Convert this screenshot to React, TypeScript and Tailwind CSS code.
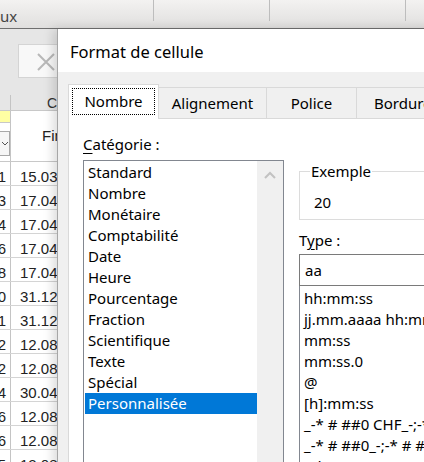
import React from "react";

const UI = { fontFamily: '"Noto Sans", "Open Sans", sans-serif' };
const CELL = { fontFamily: '"Liberation Sans", Arial, sans-serif' };

const ROWS = [
  ["1", "15.03."],
  ["3", "17.04."],
  ["4", "17.04."],
  ["6", "17.04."],
  ["8", "17.04."],
  ["0", "31.12."],
  ["1", "31.12."],
  ["2", "12.08."],
  ["2", "12.08."],
  ["4", "30.04."],
  ["6", "12.08."],
  ["6", "12.08."],
  ["5", "12.08."],
];

const CATEGORIES = [
  "Standard",
  "Nombre",
  "Monétaire",
  "Comptabilité",
  "Date",
  "Heure",
  "Pourcentage",
  "Fraction",
  "Scientifique",
  "Texte",
  "Spécial",
  "Personnalisée",
];

const FORMATS = [
  "hh:mm:ss",
  "jj.mm.aaaa hh:mm",
  "mm:ss",
  "mm:ss.0",
  "@",
  "[h]:mm:ss",
  "_-* # ##0 CHF_-;-* # ##0 CHF_-",
  "_-* # ##0_-;-* # ##0_-",
  "_-* # ##0.00_-",
];

function Sheet() {
  return (
    <div className="flex flex-col w-[60px]" style={CELL}>
      {/* barre de formule */}
      <div className="h-[66px] bg-[#e6e6e6] pt-[15px] pl-[18px]">
        <div className="h-[34px] w-[60px] bg-[#f8f8f8] border border-[#d4d4d4] pl-[18px] pt-[8px]">
          <svg width="18" height="18" viewBox="0 0 18 18">
            <path d="M1 1 L17 17 M17 1 L1 17" stroke="#b8b8b8" strokeWidth="2" fill="none" />
          </svg>
        </div>
      </div>
      {/* en-tête de colonne */}
      <div className="h-[16px] bg-[#e6e6e6] flex border-b border-[#c8c8c8]">
        <div className="w-[11px] border-r border-[#c4c4c4]" />
        <div className="pl-[36px] text-[14px] leading-[16px] text-[#333]">C</div>
      </div>
      {/* ligne de titre */}
      <div className="h-[51px] flex bg-white border-b border-[#c8c8c8]">
        <div className="w-[11px] border-r border-[#c4c4c4] flex flex-col">
          <div className="h-[12px] bg-[#ffffa3] border-b border-[#c8c8c8]" />
          <div className="mt-[8px] h-[25px] w-[10px] bg-[#f6f6f6] border border-[#a8a8a8] border-l-0 flex items-center justify-center">
            <svg width="6" height="4" viewBox="0 0 6 4">
              <path d="M0 0 L3 3 L6 0" stroke="#555" strokeWidth="1" fill="none" />
            </svg>
          </div>
        </div>
        <div className="pl-[31px] pt-[16px] text-[15px] leading-[18px] text-[#222]">Fin</div>
      </div>
      {ROWS.map((r, i) => (
        <div key={i} className="h-[24px] flex bg-white border-b border-[#d4d4d4] text-[15px] text-[#222]">
          <div className="w-[11px] border-r border-[#c4c4c4] flex justify-end pr-[4px] pt-[7px] leading-[16px]">{r[0]}</div>
          <div className="pl-[9px] pt-[7px] leading-[16px] whitespace-nowrap">{r[1]}</div>
        </div>
      ))}
    </div>
  );
}

function Tabs() {
  return (
    <div className="flex items-end h-[34px] text-[15px] text-black">
      <div className="relative z-10 -mb-px h-[35px] w-[91px] bg-white border border-b-0 border-[#d9d9d9] p-[3px]">
        <div className="h-[27px] border border-dotted border-black flex items-center justify-center">Nombre</div>
      </div>
      <div className="h-[31px] w-[108px] bg-[#f0f0f0] border-t border-r border-[#d9d9d9] flex items-center justify-center">
        Alignement
      </div>
      <div className="h-[31px] w-[90px] bg-[#f0f0f0] border-t border-r border-[#d9d9d9] flex items-center justify-center">
        Police
      </div>
      <div className="h-[31px] w-[90px] bg-[#f0f0f0] border-t border-r border-[#d9d9d9] flex items-center pl-[17px]">
        Bordure
      </div>
    </div>
  );
}

function CategoryList() {
  return (
    <div className="w-[201px] pt-[14px]">
      <div className="h-[22px] leading-[22px]">
        <u className="underline-offset-[3px]">C</u>atégorie :
      </div>
      <div className="mt-[5px] h-[320px] border border-[#828790] flex bg-white">
        <div className="w-[173px] pl-[1px] pt-[1px]">
          {CATEGORIES.map((c) => (
            <div
              key={c}
              className={`h-[21px] leading-[21px] pl-[3px] whitespace-nowrap ${
                c === "Personnalisée" ? "bg-[#0078d7] text-white" : "text-black"
              }`}
            >
              {c}
            </div>
          ))}
        </div>
        <div className="w-[26px] bg-[#f0f0f0] pt-[10px] flex justify-center">
          <svg width="12" height="8" viewBox="0 0 12 8" className="self-start">
            <path d="M1 7 L6 2 L11 7" stroke="#c2c2c2" strokeWidth="2" fill="none" />
          </svg>
        </div>
      </div>
    </div>
  );
}

function TypePanel() {
  return (
    <div className="ml-[15px] w-[170px] pt-[42px]">
      <fieldset className="border border-[#dcdcdc] p-0 m-0">
        <legend className="ml-[10px] px-[1px] leading-[20px]">Exemple</legend>
        <div className="pl-[14px] pt-[11px] pb-[6px] leading-[21px]">20</div>
      </fieldset>
      <div className="mt-[9px] h-[22px] leading-[22px]">
        T<u className="underline-offset-[3px]">y</u>pe :
      </div>
      <div className="mt-[3px] h-[32px] border border-[#7a7a7a] bg-white pl-[5px] leading-[30px]">aa</div>
      <div className="h-[200px] border border-t-0 border-[#828790] bg-white pl-[4px] pt-[2px]">
        {FORMATS.map((f) => (
          <div key={f} className="h-[21px] leading-[21px] whitespace-nowrap">
            {f}
          </div>
        ))}
      </div>
    </div>
  );
}

function Dialog() {
  return (
    <div
      className="absolute left-[57px] top-[29px] w-[400px] h-[440px] bg-[#f0f0f0] border-l border-[#a6a6a6] shadow-[-4px_0_10px_rgba(0,0,0,0.14)]"
      style={UI}
    >
      <div className="h-[43px] bg-white flex items-center pl-[12px] pt-[3px] text-[16.5px] text-black">
        Format de cellule
      </div>
      <div className="pt-[12px] pl-[10px] text-[15px] text-black">
        <Tabs />
        <div className="h-[400px] bg-white border border-[#d9d9d9] flex pl-[14px]">
          <CategoryList />
          <TypePanel />
        </div>
      </div>
    </div>
  );
}

export default function App() {
  return (
    <div className="relative w-[424px] h-[462px] overflow-hidden bg-white">
      {/* ruban */}
      <div className="h-[29px] bg-gradient-to-b from-[#f3f2f1] to-[#e0dfde] border-b border-[#6f6f6f] flex">
        <div className="w-[153px] pt-[6px] text-[15px] leading-[20px] text-[#444]" style={UI}>
          ux
        </div>
        <div className="w-[116px] border-l border-[#bdbdbd] h-[21px]" />
        <div className="w-[136px] border-l border-[#bdbdbd] h-[21px]" />
        <div className="border-l border-[#bdbdbd] h-[21px]" />
      </div>
      <Sheet />
      <Dialog />
    </div>
  );
}
